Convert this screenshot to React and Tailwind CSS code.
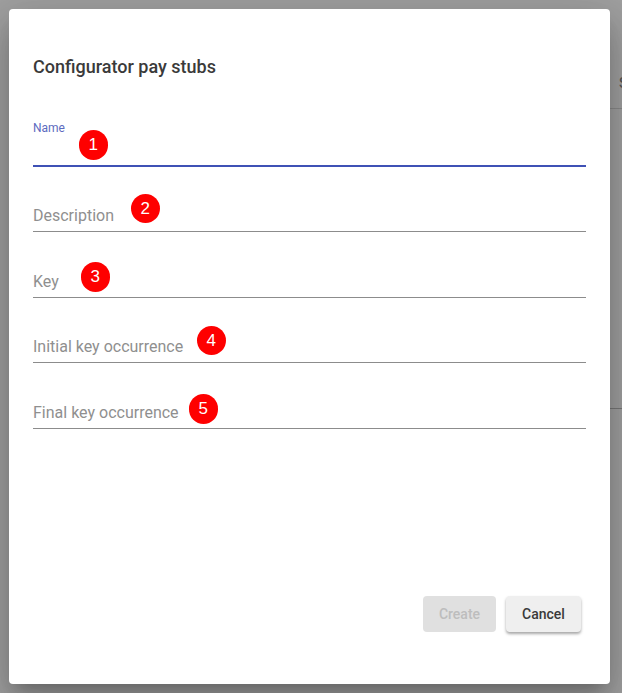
import React from 'react';

const fields = [
  { label: 'Description', badge: 2, badgeClass: 'left-[97.5px] top-[27px]' },
  { label: 'Key', badge: 3, badgeClass: 'left-[47.5px] top-[30px]' },
  { label: 'Initial key occurrence', badge: 4, badgeClass: 'left-[163.5px] top-[28px]' },
  { label: 'Final key occurrence', badge: 5, badgeClass: 'left-[155.5px] top-[31px]' },
];

const Badge = ({ n, className }) => (
  <span className={`absolute flex h-[29.5px] w-[29.5px] items-center justify-center rounded-full bg-[#fe0000] font-['Liberation_Sans',sans-serif] text-[17px] leading-none text-white ${className}`}>
    {n}
  </span>
);

const App = () => {
  return (
    <div className="relative h-[693px] w-[622px] overflow-hidden bg-[#a0a0a0] pl-[9px] pt-[9px] font-['Roboto',sans-serif]">
      {/* page behind the overlay */}
      <div className="absolute left-[619px] top-[75px] text-[14px] font-medium leading-4 text-[#555]">S</div>
      <div className="absolute left-[610px] right-0 top-[108px] h-px bg-[#8a8a8a]" />
      <div className="absolute left-[610px] right-0 top-[408px] h-px bg-[#777]" />

      <div className="relative flex h-[675px] w-[601px] flex-col rounded bg-white px-6 shadow-[0_11px_15px_-7px_rgba(0,0,0,0.2),0_24px_38px_3px_rgba(0,0,0,0.14),0_9px_46px_8px_rgba(0,0,0,0.12)]">
        <h2 className="mt-[44px] text-[18px] font-medium leading-7 text-[#3a3a3a]">Configurator pay stubs</h2>

        <div className="relative mt-[40px] -mb-[0.5px] h-[46px] border-b-2 border-[#3f51b5]">
          <label className="absolute left-0 top-0 text-[12px] leading-[14px] text-[#5c6bc0]">Name</label>
          <Badge n={1} className="left-[45.5px] top-[9px]" />
        </div>

        {fields.map((f) => (
          <div key={f.label} className="relative h-[65.5px] border-b border-[#8c8c8c]">
            <label className="absolute bottom-[5px] left-0 text-[16px] leading-5 text-[#8f8f8f]">{f.label}</label>
            <Badge n={f.badge} className={f.badgeClass} />
          </div>
        ))}

        <div className="mt-auto mb-[52px] flex justify-end gap-[10px] pr-[5px]">
          <button className="h-9 w-[73px] rounded bg-[#e0e0e0] text-[14px] font-medium text-[#bdbdbd]">Create</button>
          <button className="h-9 w-[75px] rounded bg-[#efefef] text-[14px] font-medium text-[#3a3a3a] shadow-[0_2px_3px_rgba(0,0,0,0.35)]">Cancel</button>
        </div>
      </div>
    </div>
  );
};

export default App;
